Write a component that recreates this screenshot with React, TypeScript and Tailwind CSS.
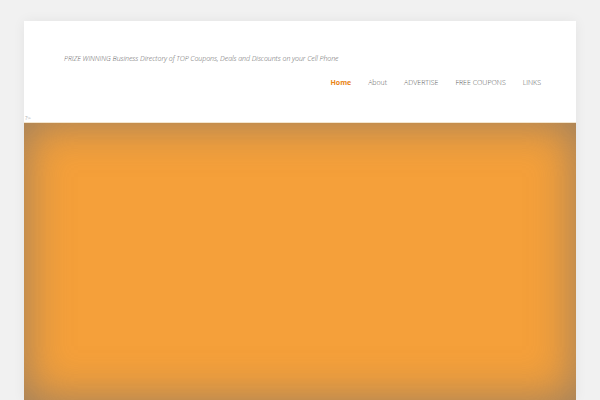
export default function App() {
  return (
    <div className="min-h-[400px] h-[400px] overflow-hidden bg-[#f1f1f1] pt-[21px]" style={{ fontFamily: '"Open Sans", "Liberation Sans", sans-serif' }}>
      <div className="mx-auto w-[552px] bg-white shadow-[0_0_12px_rgba(0,0,0,0.06)]">
        <header className="relative h-[101px]">
          <p className="pl-[40px] pt-[33px] text-[7px] italic font-light text-[#5f5f5f] leading-[10px] tracking-[-0.05px]">
            PRIZE WINNING Business Directory of TOP Coupons, Deals and Discounts on your Cell Phone
          </p>
          <nav className="mt-[14px] flex justify-end pr-[35px] text-[7px] font-light text-[#5a5a5a] leading-[10px]">
            <a className="font-bold text-[#e98316] mr-[17px]">Home</a>
            <a className="mr-[17px]">About</a>
            <a className="mr-[17px]">ADVERTISE</a>
            <a className="mr-[17px]">FREE COUPONS</a>
            <a>LINKS</a>
          </nav>
          <span className="absolute left-[1px] bottom-[1px] text-[6px] text-[#aaa] leading-none">?&gt;</span>
        </header>
        <div className="h-[278px] border-t border-[#f3e6cf] bg-[#f5a03a] shadow-[inset_0_0_45px_rgba(110,110,115,0.7)]" />
      </div>
    </div>
  );
}
